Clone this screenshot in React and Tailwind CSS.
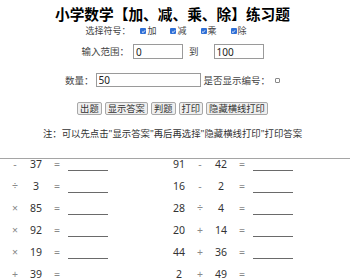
import React from 'react';

const leftRows = [
  ['', '-', '37'],
  ['', '÷', '3'],
  ['', '×', '85'],
  ['', '×', '92'],
  ['', '×', '19'],
  ['', '+', '39'],
];

const rightRows = [
  ['91', '-', '42'],
  ['16', '-', '2'],
  ['28', '÷', '4'],
  ['20', '+', '14'],
  ['44', '+', '36'],
  ['2', '+', '49'],
];

const Check = ({ checked }) =>
  checked ? (
    <span className="inline-flex h-[6px] w-[6px] items-center justify-center rounded-[1px] bg-[#2f6fd6]">
      <svg viewBox="0 0 10 10" className="h-[5px] w-[5px]">
        <path d="M2 5.2 L4.2 7.3 L8 2.8" fill="none" stroke="#fff" strokeWidth="1.8" />
      </svg>
    </span>
  ) : (
    <span className="inline-block h-[5px] w-[5px] rounded-[1px] border border-[#888] bg-white" />
  );

const Btn = ({ children }) => (
  <button className="h-[13px] rounded-[2px] border border-[#a8a8a8] bg-[#efefef] px-[2px] text-[9.3px] leading-[11px] text-[#333]">
    {children}
  </button>
);

const Group = ({ row }) => (
  <div className="flex w-[185px] shrink-0 items-center">
    <span className="w-[21px] text-center text-[#333]">{row[0]}</span>
    <span className="w-[21px] text-center text-[#8a8a8a]">{row[1]}</span>
    <span className="w-[21px] text-center text-[#333]">{row[2]}</span>
    <span className="w-[21px] text-center text-[#8a8a8a]">=</span>
    <span className="ml-[0.5px] h-[12px] w-[40px] border-b border-[#6a6a6a]" />
  </div>
);

export default function App() {
  return (
    <div
      className="h-[280px] w-[350px] overflow-hidden bg-white text-[#333]"
      style={{ fontFamily: '"Noto Sans", "Noto Sans CJK SC", sans-serif' }}
    >
      <div className="flex w-[345px] flex-col items-center">
        <h1 className="mt-[6px] h-[16px] text-[14.7px] font-bold leading-[16px] text-black">
          小学数学【加、减、乘、除】练习题
        </h1>
        <div className="mt-[2px] flex h-[14px] items-center pr-[13px] text-[9px] leading-[12px] text-[#444]">
          <span className="mr-[10px]">选择符号：</span>
          <span className="flex items-center gap-[1px]"><Check checked />加</span>
          <span className="ml-[14px] flex items-center gap-[1px]"><Check checked />减</span>
          <span className="ml-[14px] flex items-center gap-[1px]"><Check checked />乘</span>
          <span className="ml-[14px] flex items-center gap-[1px]"><Check checked />除</span>
        </div>
        <div className="mt-[6px] flex h-[15px] items-center text-[9.5px] leading-[13px] text-[#444]">
          <span>输入范围：</span>
          <input
            readOnly
            value="0"
            className="ml-[4px] h-[15px] w-[50px] border border-[#9a9a9a] px-[2px] text-[10px] text-[#222] outline-none"
          />
          <span className="ml-[6px] mr-[15px]">到</span>
          <input
            readOnly
            value="100"
            className="h-[15px] w-[50px] border border-[#9a9a9a] px-[2px] text-[10px] text-[#222] outline-none"
          />
        </div>
        <div className="mt-[14px] flex h-[14px] items-center text-[9.5px] leading-[13px] text-[#444]">
          <span>数量：</span>
          <input
            readOnly
            value="50"
            className="ml-[2px] h-[14px] w-[105px] border border-[#9a9a9a] px-[2px] text-[10px] text-[#222] outline-none"
          />
          <span className="ml-[3px] mr-[5px]">是否显示编号：</span>
          <Check />
        </div>
        <div className="mt-[15px] flex h-[13px] items-center gap-[3px]">
          <Btn>出题</Btn>
          <Btn>显示答案</Btn>
          <Btn>判题</Btn>
          <Btn>打印</Btn>
          <Btn>隐藏横线打印</Btn>
        </div>
        <div className="mt-[14px] h-[10px] text-[9.4px] leading-[10px] text-[#333]">
          注：可以先点击"显示答案"再后再选择"隐藏横线打印"打印答案
        </div>
      </div>
      <div className="mt-[19px] w-full border-t border-[#a5a5a5]" />
      <div className="mt-[-5px] flex w-full justify-center overflow-hidden text-[10.5px]">
        <div className="flex w-[383px] shrink-0 flex-col pr-[13px]">
          {leftRows.map((row, i) => (
            <div key={i} className="flex h-[22px] items-center">
              <Group row={row} />
              <Group row={rightRows[i]} />
            </div>
          ))}
        </div>
      </div>
    </div>
  );
}
